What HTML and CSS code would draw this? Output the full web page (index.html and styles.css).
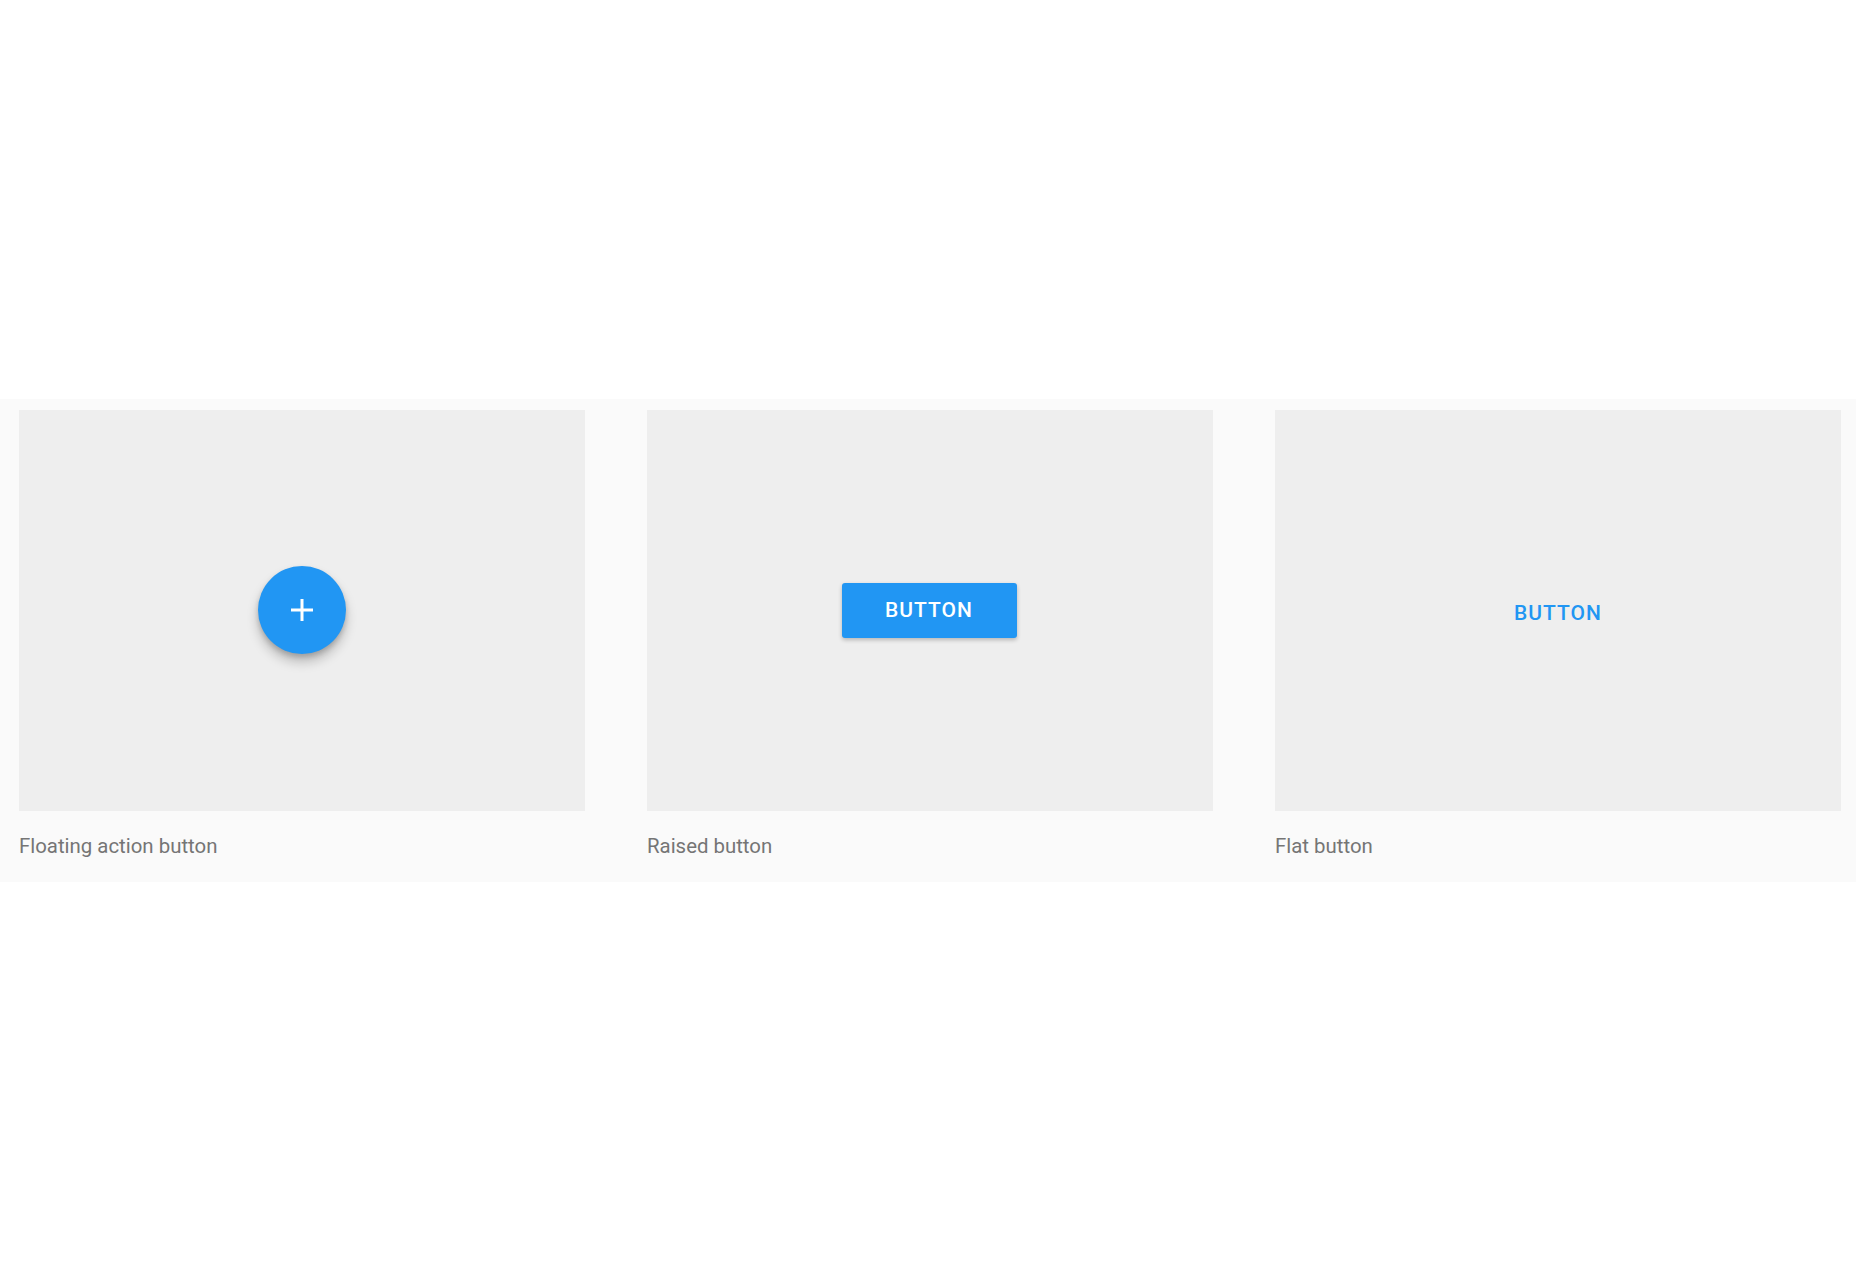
FILE: index.html
```html
<!DOCTYPE html>
<html lang="en">

<head>
  <meta charset="UTF-8">
  <meta name="viewport" content="width=device-width, initial-scale=1.0">
  <title>Buttons</title>
  <link rel="stylesheet" href="styles.css">
</head>

<body>
  <section class="showcase">
    <figure class="demo">
      <div class="stage">
        <button class="fab" aria-label="Add">
          <svg width="24" height="24" viewBox="0 0 24 24">
            <path d="M12 1v22M1 12h22" stroke="#fff" stroke-width="3" fill="none" />
          </svg>
        </button>
      </div>
      <figcaption>Floating action button</figcaption>
    </figure>

    <figure class="demo">
      <div class="stage">
        <button class="raised">Button</button>
      </div>
      <figcaption>Raised button</figcaption>
    </figure>

    <figure class="demo">
      <div class="stage">
        <button class="flat">Button</button>
      </div>
      <figcaption>Flat button</figcaption>
    </figure>
  </section>
</body>

</html>
```

FILE: styles.css
```css
body {
  font-family: 'Roboto', sans-serif;
  background-color: #fff;
  margin: 0;
  padding: 0;
  display: flex;
  flex-direction: column;
  justify-content: center;
  min-height: 100vh;
}

.showcase {
  background-color: #fafafa;
  display: grid;
  grid-template-columns: repeat(3, 1fr);
  column-gap: 62px;
  padding: 11px 15px 24px 19px;
}

.demo {
  margin: 0;
}

.stage {
  background-color: #eeeeee;
  height: 401px;
  display: flex;
  align-items: center;
  justify-content: center;
}

.demo figcaption {
  margin-top: 23px;
  font-size: 20.4px;
  line-height: 24px;
  color: #757575;
}

.fab {
  width: 88px;
  height: 88px;
  border-radius: 50%;
  border: none;
  background-color: #2196f3;
  display: flex;
  align-items: center;
  justify-content: center;
  box-shadow: 0 8px 12px rgba(0, 0, 0, 0.22), 0 3px 5px rgba(0, 0, 0, 0.16);
  cursor: pointer;
  padding: 0;
}

.raised,
.flat {
  font-family: 'Roboto', sans-serif;
  font-size: 21px;
  font-weight: 500;
  letter-spacing: 1px;
  text-transform: uppercase;
  border: none;
  cursor: pointer;
}

.raised {
  width: 175px;
  height: 55px;
  margin-left: -2px;
  background-color: #2196f3;
  color: #fff;
  border-radius: 3px;
  box-shadow: 0 2px 4px rgba(0, 0, 0, 0.24);
}

.flat {
  background: none;
  color: #2196f3;
  padding: 12px 20px;
  margin-top: 5px;
}
```
